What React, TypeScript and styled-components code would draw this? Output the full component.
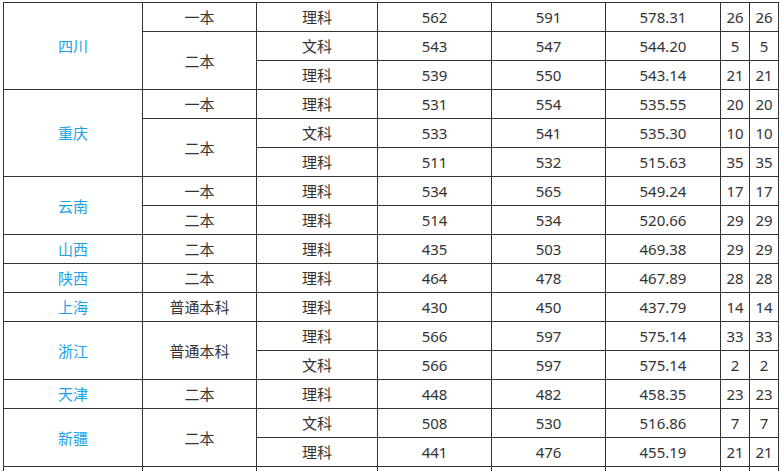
import React from "react";
import styled, { createGlobalStyle } from "styled-components";

const GlobalStyle = createGlobalStyle`
  html, body {
    margin: 0;
    padding: 0;
    background: #fff;
    overflow: hidden;
  }
  body {
    font-family: "Noto Sans", "Noto Sans CJK SC", sans-serif;
  }
`;

const Page = styled.div`
  height: 471px;
  overflow: hidden;
  padding: 2px 0 0 3px;
  box-sizing: border-box;
`;

const Table = styled.table`
  border-collapse: collapse;
  table-layout: fixed;
  width: 776px;
  font-size: 15px;
  color: #333;
`;

const Cell = styled.td<{ $blue?: boolean }>`
  border: 1px solid #333;
  height: 28px;
  padding: 0;
  text-align: center;
  vertical-align: middle;
  line-height: 20px;
  white-space: nowrap;
  color: ${(p) => (p.$blue ? "#1aa3e8" : "#333")};
`;

type Row = [string, string, string, string, string];
type Batch = { name: string; rows: Row[] };
type Province = { name: string; batches: Batch[] };

const data: Province[] = [
  {
    name: "四川",
    batches: [
      { name: "一本", rows: [["理科", "562", "591", "578.31", "26"]] },
      {
        name: "二本",
        rows: [
          ["文科", "543", "547", "544.20", "5"],
          ["理科", "539", "550", "543.14", "21"],
        ],
      },
    ],
  },
  {
    name: "重庆",
    batches: [
      { name: "一本", rows: [["理科", "531", "554", "535.55", "20"]] },
      {
        name: "二本",
        rows: [
          ["文科", "533", "541", "535.30", "10"],
          ["理科", "511", "532", "515.63", "35"],
        ],
      },
    ],
  },
  {
    name: "云南",
    batches: [
      { name: "一本", rows: [["理科", "534", "565", "549.24", "17"]] },
      { name: "二本", rows: [["理科", "514", "534", "520.66", "29"]] },
    ],
  },
  {
    name: "山西",
    batches: [{ name: "二本", rows: [["理科", "435", "503", "469.38", "29"]] }],
  },
  {
    name: "陕西",
    batches: [{ name: "二本", rows: [["理科", "464", "478", "467.89", "28"]] }],
  },
  {
    name: "上海",
    batches: [{ name: "普通本科", rows: [["理科", "430", "450", "437.79", "14"]] }],
  },
  {
    name: "浙江",
    batches: [
      {
        name: "普通本科",
        rows: [
          ["理科", "566", "597", "575.14", "33"],
          ["文科", "566", "597", "575.14", "2"],
        ],
      },
    ],
  },
  {
    name: "天津",
    batches: [{ name: "二本", rows: [["理科", "448", "482", "458.35", "23"]] }],
  },
  {
    name: "新疆",
    batches: [
      {
        name: "二本",
        rows: [
          ["文科", "508", "530", "516.86", "7"],
          ["理科", "441", "476", "455.19", "21"],
        ],
      },
    ],
  },
];

const widths = [139, 114, 121, 114, 114, 115, 29, 29];

export default function App() {
  const body: React.ReactNode[] = [];
  data.forEach((prov) => {
    const provSpan = prov.batches.reduce((n, b) => n + b.rows.length, 0);
    prov.batches.forEach((batch, bi) => {
      batch.rows.forEach((row, ri) => {
        body.push(
          <tr key={`${prov.name}-${bi}-${ri}`}>
            {bi === 0 && ri === 0 && (
              <Cell $blue rowSpan={provSpan}>
                {prov.name}
              </Cell>
            )}
            {ri === 0 && <Cell rowSpan={batch.rows.length}>{batch.name}</Cell>}
            <Cell>{row[0]}</Cell>
            <Cell>{row[1]}</Cell>
            <Cell>{row[2]}</Cell>
            <Cell>{row[3]}</Cell>
            <Cell>{row[4]}</Cell>
            <Cell>{row[4]}</Cell>
          </tr>
        );
      });
    });
  });

  // the next row starts just above the bottom edge; only its borders show
  body.push(
    <tr key="next">
      {widths.map((_, i) => (
        <Cell key={i} />
      ))}
    </tr>
  );

  return (
    <>
      <GlobalStyle />
      <Page>
        <Table>
          <colgroup>
            {widths.map((w, i) => (
              <col key={i} style={{ width: w }} />
            ))}
          </colgroup>
          <tbody>{body}</tbody>
        </Table>
      </Page>
    </>
  );
}
